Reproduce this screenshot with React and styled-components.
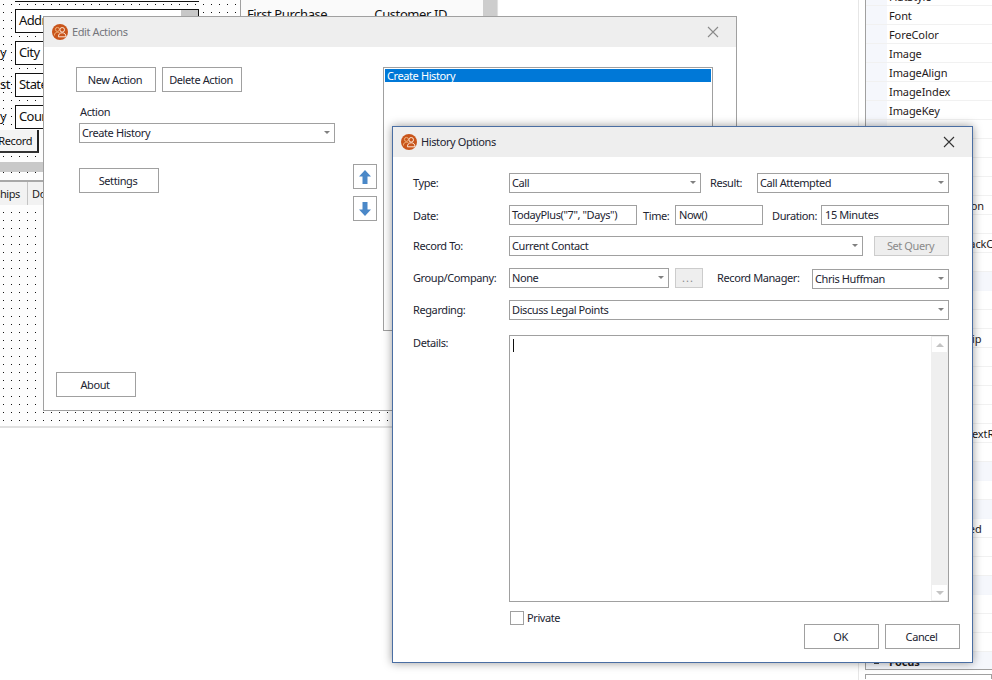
import React from "react"
import styled, { createGlobalStyle } from "styled-components"

const GlobalStyle = createGlobalStyle`
  html, body {
    margin: 0;
    padding: 0;
    background: #fff;
  }
  * {
    box-sizing: border-box;
  }
`

const FONT = `"Noto Sans", "Open Sans", sans-serif`

const Screen = styled.div`
  position: relative;
  width: 992px;
  height: 680px;
  overflow: hidden;
  display: flex;
  justify-content: space-between;
  align-items: flex-start;
  background: #fff;
  font-family: ${FONT};
  font-size: 11px;
  letter-spacing: -0.4px;
  color: #222431;
`

/* ---------- form designer behind the dialogs ---------- */

const Designer = styled.div`
  position: relative;
  width: 499px;
  height: 428px;
  border-bottom: 2px solid #e0e0e0;
  background-color: #fdfdfd;
  background-image: conic-gradient(at 1px 1px, transparent 75%, #111 0);
  background-position: 3px 4px;
  background-size: 8px 8px;
`

const DesignBox = styled.div`
  position: absolute;
  left: 15px;
  top: ${(p) => p.$top}px;
  width: 184px;
  height: 24px;
  padding-left: 3px;
  border: 1px solid #111;
  background: #fff;
  font-size: 13px;
  letter-spacing: -0.6px;
  line-height: 21px;
  color: #111;
  overflow: hidden;
`

const BoxThumb = styled.div`
  position: absolute;
  right: 0;
  top: 0;
  width: 17px;
  height: 7px;
  background: #c8c8c8;
`

const DesignLabel = styled.div`
  position: absolute;
  left: 0;
  top: ${(p) => p.$top}px;
  font-size: 13px;
  color: #111;
`

const TopRule = styled.div`
  position: absolute;
  left: 15px;
  top: 1px;
  width: 184px;
  height: 1px;
  background: #111;
`

const RecordButton = styled.div`
  position: absolute;
  left: 0;
  top: 130px;
  width: 39px;
  height: 23px;
  display: flex;
  justify-content: flex-end;
  padding-right: 5px;
  border-right: 2px solid #222;
  border-bottom: 2px solid #333;
  background: #f4f4f4;
  line-height: 22px;
  color: #111;
`

const HScrollBar = styled.div`
  position: absolute;
  left: 0;
  top: 162px;
  width: 240px;
  height: 10px;
  background: #c9c9c9;
`

const TabStrip = styled.div`
  position: absolute;
  left: 0;
  top: 180px;
  width: 240px;
  height: 25px;
  display: flex;
  border-top: 2px solid #a8a8a8;
  background: #f2f2f2;
  line-height: 23px;
  color: #222;
`

const DesignTab = styled.div`
  width: ${(p) => p.$width}px;
  display: flex;
  justify-content: ${(p) => p.$first ? "flex-end" : "flex-start"};
  white-space: nowrap;
  padding: 0 ${(p) => p.$first ? 7 : 0}px 0 ${(p) => p.$first ? 0 : 4}px;
  border-right: 1px solid #c4c4c4;
`

const FieldPanel = styled.div`
  position: absolute;
  left: 240px;
  top: 0;
  width: 243px;
  height: 400px;
  display: flex;
  gap: 47px;
  padding: 5px 0 0 6px;
  border-left: 1px solid #a0a0a0;
  background: #fafafa;
  font-size: 13px;
  color: #111;
`

const PanelScroll = styled.div`
  position: absolute;
  left: 483px;
  top: 0;
  width: 15px;
  height: 400px;
  border-right: 1px solid #e0e0e0;
  background: #cdcdcd;
`

/* ---------- property grid on the right ---------- */

const PropertyGrid = styled.div`
  width: 134px;
  height: 680px;
  flex-shrink: 0;
  padding-left: 6px;
  border-left: 1px solid #e6e6e6;
`

const GridFrame = styled.div`
  height: 670px;
  border-left: 1px solid #a0a0a0;
  border-bottom: 1px solid #a0a0a0;
  overflow: hidden;
`

const PropRows = styled.div`
  margin-top: -13px;
`

const PropRow = styled.div`
  position: relative;
  height: 19px;
  display: flex;
  align-items: center;
  padding-left: 23px;
  white-space: nowrap;
  letter-spacing: -0.1px;
  border-bottom: 1px solid ${(p) => p.$cat ? "#f4f6fb" : "#f1f1f1"};
  font-weight: ${(p) => p.$cat ? 700 : 400};
  color: #1f1a1a;
  background: ${(p) => p.$cat
    ? "#f5f7fc"
    : "linear-gradient(to right, #f5f7fc 0, #f5f7fc 21px, #fff 21px)"};
`

const CollapseMark = styled.span`
  position: absolute;
  left: 8px;
  top: 11px;
  width: 5px;
  height: 1px;
  background: #444;
`

const DescBox = styled.div`
  height: 5px;
  margin-top: 4px;
  border: 1px solid #a0a0a0;
  border-bottom: 0;
`

/* ---------- dialogs ---------- */

const Dialog = styled.div`
  position: absolute;
  left: ${(p) => p.$left}px;
  top: ${(p) => p.$top}px;
  width: ${(p) => p.$width}px;
  height: ${(p) => p.$height}px;
  display: flex;
  flex-direction: column;
  background: #fff;
  border: 1px solid ${(p) => p.$active ? "#4a6ea3" : "#a0a0a0"};
  box-shadow: ${(p) => p.$active ? "0 0 9px rgba(0, 0, 0, 0.4)" : "none"};
`

const TitleBar = styled.div`
  height: 30px;
  flex-shrink: 0;
  display: flex;
  align-items: center;
  padding: 0 17px 1px 8px;
  gap: 4px;
  background: #eeeeee;
  color: ${(p) => p.$active ? "#222431" : "#74757c"};
`

const CloseIcon = styled.svg`
  margin-left: auto;
  width: 12px;
  height: 12px;
  stroke: ${(p) => p.$active ? "#333" : "#8a8a8a"};
  stroke-width: 1.1;
  fill: none;
`

const Button = styled.div`
  width: ${(p) => p.$width || 80}px;
  height: ${(p) => p.$height || 25}px;
  flex-shrink: 0;
  margin-left: ${(p) => p.$ml || 0}px;
  margin-top: ${(p) => p.$auto ? "auto" : 0};
  padding: 0 2px ${(p) => p.$height ? 1 : 0}px 0;
  display: flex;
  align-items: center;
  justify-content: center;
  letter-spacing: ${(p) => p.$spread ? "1px" : "inherit"};
  border: 1px solid ${(p) => p.$disabled ? "#cccccc" : "#a0a0a0"};
  background: ${(p) => p.$disabled ? "#eeeeee" : "#fff"};
  color: ${(p) => p.$disabled ? "#8a8a8a" : "inherit"};
`

const Field = styled.div`
  position: relative;
  width: ${(p) => p.$width}px;
  height: 20px;
  flex-shrink: 0;
  margin-left: ${(p) => p.$ml || 0}px;
  margin-top: ${(p) => p.$mt || 0}px;
  padding-left: ${(p) => p.$pad ?? 3}px;
  border: 1px solid #a0a0a0;
  background: #fff;
  line-height: 17px;
  white-space: nowrap;
`

const Caret = styled.span`
  position: absolute;
  right: 4px;
  top: 7px;
  width: 0;
  height: 0;
  border-left: 3.5px solid transparent;
  border-right: 3.5px solid transparent;
  border-top: 3.5px solid #808080;
`

const Combo = ({ children, ...rest }) => (
  <Field $pad={2} {...rest}>
    {children}
    <Caret />
  </Field>
)

const AppIcon = () => (
  <svg width="16" height="16" viewBox="0 0 16 16">
    <circle cx="8" cy="8" r="8" fill="#c9551b" />
    <circle cx="5.4" cy="5.4" r="2" fill="none" stroke="#f0b27a" strokeWidth="1" />
    <path d="M2.4 11.5c0-2.2 1.3-3.3 3-3.3 1 0 1.6.3 2.2.8" fill="none" stroke="#f0b27a" strokeWidth="1" />
    <circle cx="10.2" cy="5.8" r="2.3" fill="none" stroke="#fbe6d6" strokeWidth="1" />
    <path d="M6.4 12.8c0-2.6 1.6-4 3.8-4s3.8 1.4 3.8 4z" fill="none" stroke="#fbe6d6" strokeWidth="1" />
  </svg>
)

const Close = ({ active }) => (
  <CloseIcon viewBox="0 0 12 12" $active={active}>
    <path d="M1 1l10 10M11 1L1 11" />
  </CloseIcon>
)

/* Edit Actions */

const EditBody = styled.div`
  flex: 1;
  display: flex;
  padding: 20px 0 13px 12px;
`

const EditLeft = styled.div`
  width: 297px;
  display: flex;
  flex-direction: column;
`

const ButtonRow = styled.div`
  display: flex;
  gap: 6px;
  margin-left: 20px;
`

const ActionLabel = styled.div`
  margin: 12px 0 4px 24px;
  line-height: 15px;
`

const Stack = styled.div`
  margin-left: 23px;
  margin-top: ${(p) => p.$mt || 0}px;
`

const ArrowColumn = styled.div`
  display: flex;
  flex-direction: column;
  gap: 7px;
  margin-top: 97px;
`

const ListBox = styled.div`
  width: 330px;
  height: 264px;
  margin-left: 6px;
  padding: 1px;
  border: 1px solid #a0a0a0;
  background: #fff;
`

const ListItem = styled.div`
  height: 13px;
  padding-left: 2px;
  line-height: 13px;
  background: #0078d7;
  color: #fff;
`

const ArrowButton = styled(Button)`
  padding: 0;
`

const MoveArrow = ({ flip }) => (
  <svg width="12" height="14" viewBox="0 0 12 14" style={flip ? { transform: "scaleY(-1)" } : undefined}>
    <path d="M6 0l6 6.5H8.5V14h-5V6.5H0z" fill="#4a88c8" />
  </svg>
)

/* History Options */

const HistoryBody = styled.div`
  flex: 1;
  display: flex;
  flex-direction: column;
  padding: 16px 12px 0 20px;
`

const Row = styled.div`
  display: flex;
  align-items: flex-start;
  margin-top: ${(p) => p.$mt || 0}px;
`

const Label = styled.div`
  width: ${(p) => p.$width || 96}px;
  flex-shrink: 0;
  margin-left: ${(p) => p.$ml || 0}px;
  margin-top: ${(p) => p.$mt ?? 2}px;
  line-height: 16px;
  white-space: nowrap;
`

const DetailsBox = styled.div`
  position: relative;
  width: 440px;
  height: 267px;
  padding: 3px 0 0 3px;
  border: 1px solid #a0a0a0;
`

const TextCursor = styled.div`
  width: 1px;
  height: 13px;
  background: #111;
`

const ScrollTrack = styled.div`
  position: absolute;
  right: 0;
  top: 0;
  bottom: 0;
  width: 17px;
  display: flex;
  flex-direction: column;
  justify-content: space-between;
  padding: 1px;
  background: #efefef;
`

const ScrollButton = styled.div`
  height: 15px;
  display: flex;
  align-items: center;
  justify-content: center;
  background: #fff;
`

const ScrollArrow = styled.span`
  width: 0;
  height: 0;
  border-left: 4px solid transparent;
  border-right: 4px solid transparent;
  ${(p) => p.$down ? "border-top: 4px solid #c4c4c4;" : "border-bottom: 4px solid #c4c4c4;"}
`

const Footer = styled.div`
  display: flex;
  align-items: flex-start;
  margin-top: 9px;
  padding-left: 97px;
`

const CheckBox = styled.div`
  width: 14px;
  height: 14px;
  margin-right: 3px;
  border: 1px solid #a0a0a0;
`

const CheckText = styled.div`
  line-height: 14px;
`

const FooterButtons = styled.div`
  display: flex;
  gap: 6px;
  margin-left: auto;
  margin-top: 13px;
`

const props = [
  "FlatStyle", "Font", "ForeColor", "Image", "ImageAlign", "ImageIndex", "ImageKey", "ImageList",
  "RightToLeft", "Text", "TextAlign", "TextImageRelation", "UseMnemonic", "UseVisualStyleBackColor",
  "UseWaitCursor", { cat: "Behavior" }, "AllowDrop", "AutoEllipsis", "ContextMenuStrip", "DialogResult",
  "Enabled", "TabIndex", "TabStop", "UseCompatibleTextRendering", "Visible", { cat: "Data" },
  "(DataBindings)", { cat: "Design" }, "DesignerLocalized", "Modifiers", "Locked",
  { cat: "Layout" }, "Anchor", "AutoSize", "Dock", { cat: "Focus" },
]

export default function App() {
  return (
    <Screen>
      <GlobalStyle />

      <Designer>
        <TopRule />
        <DesignBox $top={9}>Address<BoxThumb /></DesignBox>
        <DesignLabel $top={43}>y</DesignLabel>
        <DesignBox $top={41}>City</DesignBox>
        <DesignLabel $top={75}>st</DesignLabel>
        <DesignBox $top={73}>State</DesignBox>
        <DesignLabel $top={107}>y</DesignLabel>
        <DesignBox $top={105}>Country</DesignBox>
        <RecordButton>Record</RecordButton>
        <HScrollBar />
        <TabStrip>
          <DesignTab $first $width={28}>Relationships</DesignTab>
          <DesignTab $width={70}>Documents</DesignTab>
        </TabStrip>
        <FieldPanel>
          <span>First Purchase</span>
          <span>Customer ID</span>
        </FieldPanel>
        <PanelScroll />
      </Designer>

      <PropertyGrid>
        <GridFrame>
          <PropRows>
            {props.map((p) =>
              typeof p === "string"
                ? <PropRow key={p}>{p}</PropRow>
                : <PropRow key={p.cat} $cat>{p.cat === "Focus" && <CollapseMark />}{p.cat}</PropRow>
            )}
          </PropRows>
        </GridFrame>
        <DescBox />
      </PropertyGrid>

      <Dialog $left={43} $top={16} $width={694} $height={395}>
        <TitleBar>
          <AppIcon />
          <span>Edit Actions</span>
          <Close />
        </TitleBar>
        <EditBody>
          <EditLeft>
            <ButtonRow>
              <Button>New Action</Button>
              <Button>Delete Action</Button>
            </ButtonRow>
            <ActionLabel>Action</ActionLabel>
            <Stack>
              <Combo $width={256}>Create History</Combo>
            </Stack>
            <Stack $mt={25}>
              <Button>Settings</Button>
            </Stack>
            <Button $auto>About</Button>
          </EditLeft>
          <ArrowColumn>
            <ArrowButton $width={24}><MoveArrow /></ArrowButton>
            <ArrowButton $width={24}><MoveArrow flip /></ArrowButton>
          </ArrowColumn>
          <ListBox>
            <ListItem>Create History</ListItem>
          </ListBox>
        </EditBody>
      </Dialog>

      <Dialog $active $left={392} $top={126} $width={581} $height={537}>
        <TitleBar $active>
          <AppIcon />
          <span>History Options</span>
          <Close active />
        </TitleBar>
        <HistoryBody>
          <Row>
            <Label>Type:</Label>
            <Combo $width={192}>Call</Combo>
            <Label $ml={9} $width={47}>Result:</Label>
            <Combo $width={192}>Call Attempted</Combo>
          </Row>
          <Row $mt={12}>
            <Label $mt={3}>Date:</Label>
            <Field $width={128} $pad={2}>TodayPlus("7", "Days")</Field>
            <Label $ml={6} $width={32} $mt={3}>Time:</Label>
            <Field $width={88}>Now()</Field>
            <Label $ml={9} $width={49} $mt={3}>Duration:</Label>
            <Field $width={128}>15 Minutes</Field>
          </Row>
          <Row $mt={11}>
            <Label>Record To:</Label>
            <Combo $width={354}>Current Contact</Combo>
            <Button $disabled $ml={11} $width={75} $height={20}>Set Query</Button>
          </Row>
          <Row $mt={12}>
            <Label>Group/Company:</Label>
            <Combo $width={160}>None</Combo>
            <Button $disabled $spread $ml={6} $width={28} $height={20}>...</Button>
            <Label $ml={14} $width={95}>Record Manager:</Label>
            <Combo $width={137} $mt={1}>Chris Huffman</Combo>
          </Row>
          <Row $mt={11}>
            <Label>Regarding:</Label>
            <Combo $width={440}>Discuss Legal Points</Combo>
          </Row>
          <Row $mt={15}>
            <Label $mt={0}>Details:</Label>
            <DetailsBox>
              <TextCursor />
              <ScrollTrack>
                <ScrollButton><ScrollArrow /></ScrollButton>
                <ScrollButton><ScrollArrow $down /></ScrollButton>
              </ScrollTrack>
            </DetailsBox>
          </Row>
          <Footer>
            <CheckBox />
            <CheckText>Private</CheckText>
            <FooterButtons>
              <Button $width={75}>OK</Button>
              <Button $width={75}>Cancel</Button>
            </FooterButtons>
          </Footer>
        </HistoryBody>
      </Dialog>
    </Screen>
  )
}
